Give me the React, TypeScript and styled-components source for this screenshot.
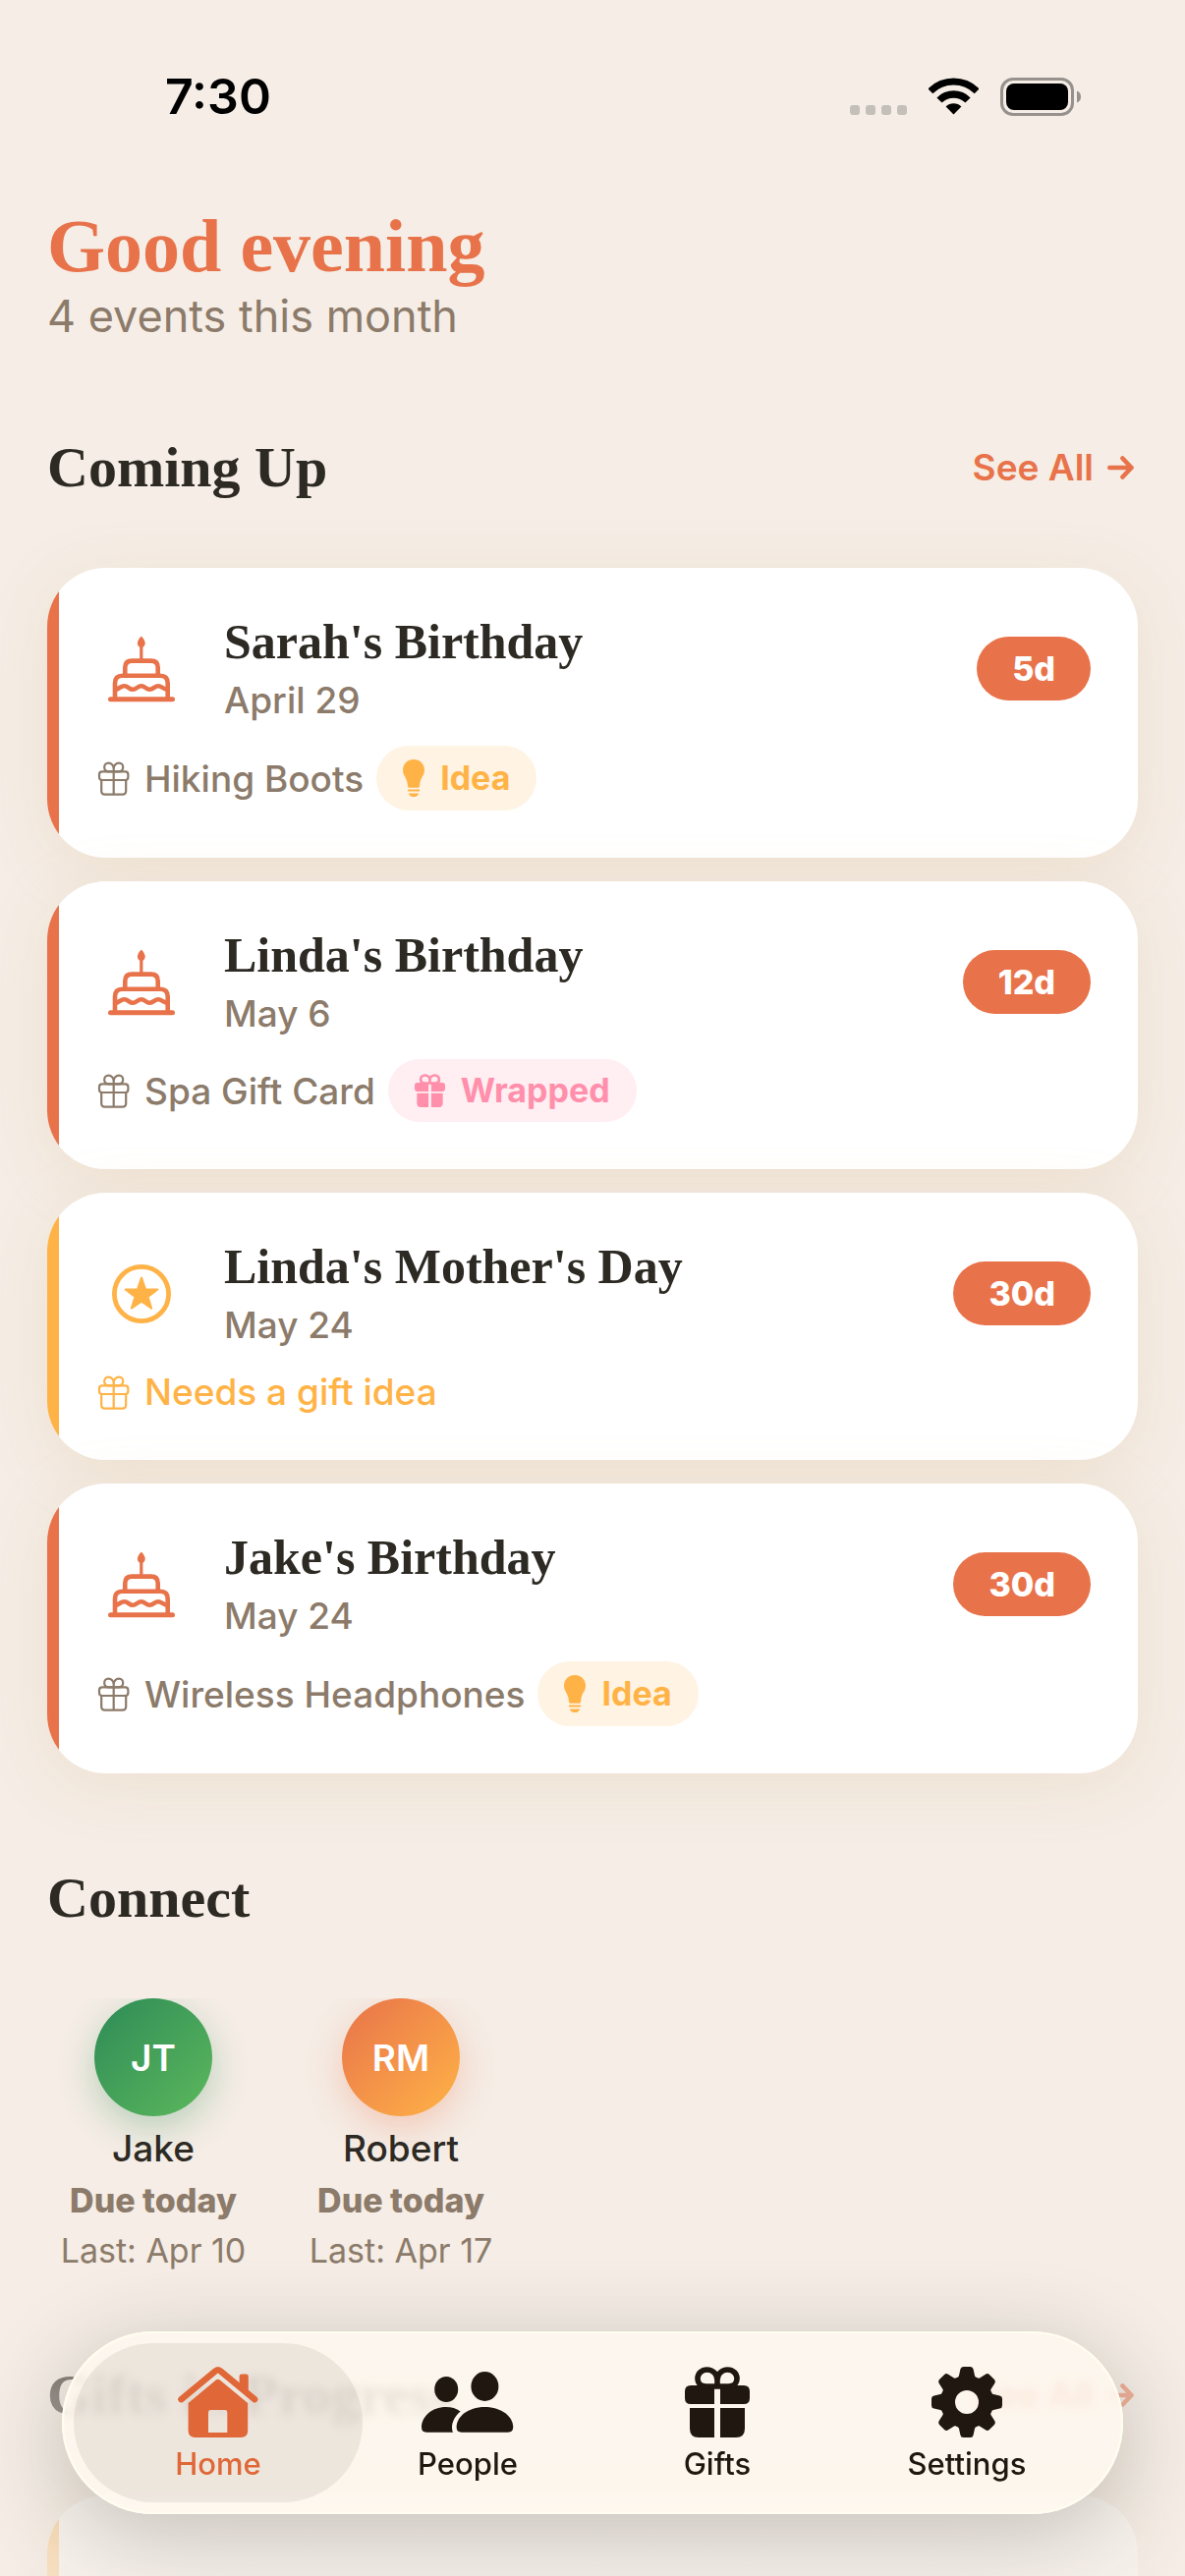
import React from "react";
import styled, { createGlobalStyle } from "styled-components";

const color = {
  page: "#f5ede6",
  ink: "#2d2a24",
  muted: "#8c7b6a",
  coral: "#e8734a",
  amber: "#ffb347",
  pink: "#ff8fab",
};

const sans = `Inter, "Liberation Sans", sans-serif`;
const serif = `"Liberation Serif", serif`;

const GlobalStyle = createGlobalStyle`
  * { box-sizing: border-box; }
  body { margin: 0; background: ${color.page}; }
  h1, h2, h3, p, ul { margin: 0; padding: 0; }
  ul { list-style: none; }
  svg { display: block; flex: none; }
`;

const Shell = styled.div`
  position: relative;
  height: 100vh;
  overflow: hidden;
  background: ${color.page};
  color: ${color.ink};
  font-family: ${sans};
`;

const Scroller = styled.div`
  height: 100%;
  overflow-y: auto;
  scrollbar-width: none;
`;

const StatusBar = styled.div`
  display: flex;
  align-items: center;
  justify-content: space-between;
  padding: 67px 106px 0 168px;
  color: #000;
`;

const Clock = styled.span`
  font-size: 50px;
  line-height: 62px;
  font-weight: 600;
`;

const StatusIcons = styled.div`
  display: flex;
  align-items: center;
  gap: 22px;
`;

const Main = styled.main`
  display: flex;
  flex-direction: column;
  gap: 91px;
  padding: 79px 48px 0;
`;

const Greeting = styled.header`
  display: flex;
  flex-direction: column;
  gap: 3px;
`;

const GreetingTitle = styled.h1`
  font: 700 76px/84px ${serif};
  color: ${color.coral};
`;

const GreetingNote = styled.p`
  font-size: 45px;
  line-height: 54px;
  color: ${color.muted};
`;

const Section = styled.section`
  display: flex;
  flex-direction: column;
  gap: 66px;
`;

const SectionHead = styled.div`
  display: flex;
  align-items: center;
  justify-content: space-between;
`;

const SectionTitle = styled.h2`
  font: 700 58px/72px ${serif};
`;

const SeeAllLink = styled.a`
  display: flex;
  align-items: center;
  gap: 14px;
  padding-right: 4px;
  font-size: 37px;
  line-height: 44px;
  font-weight: 600;
  color: ${color.coral};
  text-decoration: none;
`;

const CardList = styled.ul`
  display: flex;
  flex-direction: column;
  gap: 24px;
`;

const Card = styled.li<{ $accent: string }>`
  display: flex;
  flex-direction: column;
  gap: 24px;
  min-height: 240px;
  padding: 48px;
  border-radius: 60px;
  background: linear-gradient(to right, ${(p) => p.$accent} 12px, #fff 12px);
  box-shadow: 0 12px 60px rgba(212, 180, 131, 0.22);
`;

const CardHead = styled.div`
  display: flex;
  align-items: center;
  gap: 36px;
`;

const CardText = styled.div`
  display: flex;
  flex-direction: column;
  flex: 1;
  gap: 10px;
`;

const CardTitle = styled.h3`
  font: 700 50px/54px ${serif};
`;

const CardDate = styled.p`
  font-size: 37px;
  line-height: 45px;
  font-weight: 500;
  color: ${color.muted};
`;

const CountPill = styled.span`
  padding: 12px 36px;
  border-radius: 33px;
  background: ${color.coral};
  color: #fff;
  font-size: 34px;
  line-height: 41px;
  font-weight: 800;
`;

const GiftRow = styled.div<{ $tone: string }>`
  display: flex;
  align-items: center;
  gap: 13px;
  color: ${(p) => p.$tone};
  font-size: 37px;
  line-height: 43px;
  font-weight: 500;
`;

const Badge = styled.span<{ $tone: string; $fill: string }>`
  display: flex;
  align-items: center;
  gap: 16px;
  padding: 14px 27px;
  border-radius: 33px;
  background: ${(p) => p.$fill};
  color: ${(p) => p.$tone};
  font-size: 34px;
  line-height: 36px;
  font-weight: 700;
`;

const PeopleRow = styled.ul`
  display: flex;
  gap: 36px;
  margin: 0 -48px;
  padding: 0 48px;
  overflow-x: auto;
  overflow-y: hidden;
  scrollbar-width: none;
`;

const Person = styled.li`
  display: flex;
  flex-direction: column;
  align-items: center;
  gap: 11px;
  width: 216px;
  flex: none;
`;

const Avatar = styled.span<{ $from: string; $to: string; $glow: string }>`
  display: flex;
  align-items: center;
  justify-content: center;
  width: 120px;
  height: 120px;
  border-radius: 50%;
  background: linear-gradient(135deg, ${(p) => p.$from}, ${(p) => p.$to});
  box-shadow: 0 12px 36px ${(p) => p.$glow};
  color: #fff;
  font-size: 37px;
  font-weight: 600;
`;

const PersonName = styled.h3`
  font-size: 37px;
  line-height: 44px;
  font-weight: 500;
`;

const PersonNote = styled.p<{ $strong?: boolean }>`
  font-size: 34px;
  line-height: 40px;
  font-weight: ${(p) => (p.$strong ? 800 : 400)};
  color: ${color.muted};
`;

const BottomFade = styled.div`
  position: absolute;
  inset: auto 0 0;
  height: 320px;
  pointer-events: none;
  background: linear-gradient(
    rgba(245, 237, 230, 0),
    rgba(245, 237, 230, 0.5) 42%,
    rgba(245, 237, 230, 0.78)
  );
`;

const TabBar = styled.nav`
  position: absolute;
  inset: auto 63px 63px;
  display: flex;
  padding: 12px;
  border-radius: 93px;
  background: rgba(255, 248, 240, 0.78);
  backdrop-filter: blur(5px);
  box-shadow: inset 0 0 0 2px #fffdf0, 0 20px 90px rgba(62, 56, 42, 0.28);
`;

const Tab = styled.button<{ $active?: boolean }>`
  display: flex;
  flex: 1 1 0;
  flex-direction: column;
  align-items: center;
  gap: 9px;
  padding: 24px 0 21px;
  border: 0;
  border-radius: 81px;
  background: ${(p) => (p.$active ? "rgba(120, 110, 95, 0.12)" : "transparent")};
  color: ${(p) => (p.$active ? "#e06737" : "#1f1710")};
  font: 500 31px/36px ${sans};

  & + & {
    margin-left: -40px;
  }
`;

const SignalDots = () => (
  <svg width="58" height="38" viewBox="0 0 58 38" fill="#c5bfb9">
    {[0, 16, 32, 48].map((x) => (
      <rect key={x} x={x} y="28" width="10" height="10" rx="3" />
    ))}
  </svg>
);

const WifiIcon = () => (
  <svg width="51" height="38" viewBox="0 0 51 38" fill="none" stroke="#000">
    <path d="M1.8 13.8A33.5 33.5 0 0 1 49.2 13.8" strokeWidth="7" />
    <path d="M11 23A20.5 20.5 0 0 1 40 23" strokeWidth="7.4" />
    <path d="M25.5 37.6L17.6 29.4A11.5 11.5 0 0 1 33.4 29.4Z" fill="#000" stroke="none" />
  </svg>
);

const BatteryIcon = () => (
  <svg width="82" height="39" viewBox="0 0 82 39">
    <rect x="1.5" y="1.5" width="72" height="36" rx="11.5" fill="none" stroke="#96918c" strokeWidth="3" />
    <rect x="6" y="6" width="63" height="27" rx="8" />
    <path d="M78 13.5Q82 15 82 19.5T78 25.5Z" fill="#96918c" />
  </svg>
);

const ArrowIcon = () => (
  <svg width="27" height="24" viewBox="0 0 27 24" fill="none" stroke="currentColor" strokeWidth="4.6" strokeLinecap="round" strokeLinejoin="round">
    <path d="M2.3 12H24.5M15.5 2.5L24.5 12L15.5 21.5" />
  </svg>
);

const CakeIcon = () => (
  <svg width="96" height="96" viewBox="0 1 96 96" fill="none" stroke={color.coral} strokeWidth="4.6">
    <path d="M16.5 79.7H79.5" strokeLinecap="round" strokeWidth="5" />
    <path d="M21 79V63.5Q21 55.8 28.7 55.8H67Q74.7 55.8 74.7 63.5V79" />
    <path d="M31.3 56V47.5Q31.3 40.6 38.2 40.6H57.8Q64.7 40.6 64.7 47.5V56" />
    <path d="M21 69.8C25 69.8 26.5 66.2 30.5 66.2S35.5 69.8 39.2 69.8S44 66.2 47.8 66.2S52.5 69.8 56.3 69.8S61.5 66.2 65 66.2S70.5 69.8 74.7 69.8" />
    <path d="M47.8 26V40" strokeWidth="3.2" />
    <path d="M47.8 15.4C50 17.5 51.7 20.3 51.7 22.6C51.7 25.4 50 27.2 47.8 27.2S43.9 25.4 43.9 22.6C43.9 20.3 45.6 17.5 47.8 15.4Z" fill={color.coral} stroke="none" />
  </svg>
);

const StarIcon = () => (
  <svg width="96" height="96" viewBox="0 0 96 96">
    <circle cx="48" cy="48" r="27.6" fill="none" stroke={color.amber} strokeWidth="4.8" />
    <path
      d="M48 31.5L52.1 43.3L64.4 43.5L54.6 51L58.2 62.8L48 55.8L37.8 62.8L41.4 51L31.6 43.5L43.9 43.3Z"
      fill={color.amber}
      stroke={color.amber}
      strokeWidth="2"
      strokeLinejoin="round"
    />
  </svg>
);

const GiftOutlineIcon = () => (
  <svg width="38" height="38" viewBox="0 0 38 38" fill="none" stroke="currentColor" strokeWidth="2.2">
    <rect x="5" y="12.4" width="29.4" height="8.6" rx="3" />
    <path d="M7.2 21V32Q7.2 35.6 10.8 35.6H28.6Q32.2 35.6 32.2 32V21M19.7 12V35.6" />
    <path d="M19.7 12.4H15C11.6 12.4 10.2 10.2 10.2 8C10.2 5.4 12 3.6 14.3 3.6C17.3 3.6 19.7 6.2 19.7 9.6V12.4H24.4C27.8 12.4 29.2 10.2 29.2 8C29.2 5.4 27.4 3.6 25.1 3.6C22.1 3.6 19.7 6.2 19.7 9.6" />
  </svg>
);

const BulbIcon = () => (
  <svg width="22" height="38" viewBox="0 0 22 38" fill="currentColor">
    <path d="M11 0C17.3 0 22 4.6 22 11C22 15.6 18.4 18.6 17.6 23L17 27.2Q16.8 28.8 15.2 28.8H6.8Q5.2 28.8 5 27.2L4.4 23C3.6 18.6 0 15.6 0 11C0 4.6 4.7 0 11 0Z" />
    <rect x="4.8" y="30.4" width="12.4" height="2.2" rx="1.1" />
    <path d="M5.8 34.4H16.2C15.5 36.8 13.6 38 11 38S6.5 36.8 5.8 34.4Z" />
  </svg>
);

const GiftSolidIcon = ({ width, height }: { width: number; height: number }) => (
  <svg width={width} height={height} viewBox="0 0 66 72" fill="currentColor">
    <path d="M30 19H6Q0 19 0 25V32Q0 38 6 38H30ZM36 19H60Q66 19 66 25V32Q66 38 60 38H36ZM30 42H5V63Q5 72 14 72H30ZM36 42H61V63Q61 72 52 72H36Z" />
    <path
      d="M33 20V13.5C33 7.5 28.5 3 22.5 3C17 3 13 7 13 12C13 16.8 16.5 20 21.5 20H44.5C49.5 20 53 16.8 53 12C53 7 49 3 43.5 3C37.5 3 33 7.5 33 13.5"
      fill="none"
      stroke="currentColor"
      strokeWidth="5.6"
    />
  </svg>
);

const HomeIcon = () => (
  <svg width="82" height="72" viewBox="0 0 82 72" fill="currentColor">
    <path d="M3.4 33.2L38.4 4.2Q40.8 2.4 43.2 4.2L78.2 33.2" fill="none" stroke="currentColor" strokeWidth="6.4" strokeLinecap="round" strokeLinejoin="round" />
    <path d="M62.6 22V10Q62.6 7.6 65 7.6H69.4Q71.8 7.6 71.8 10V30Z" />
    <path fillRule="evenodd" d="M38.8 13.6Q40.8 12 42.8 13.6L71.2 37V65Q71.2 72 64.2 72H17.6Q10.6 72 10.6 65V37ZM33.4 44Q31 44 31 46.4V67H50.3V46.4Q50.3 44 47.9 44Z" />
  </svg>
);

const PeopleIcon = () => (
  <svg width="94" height="72" viewBox="0 -5 94 72" fill="currentColor">
    <ellipse cx="25.2" cy="18" rx="12" ry="13" />
    <ellipse cx="64.4" cy="15" rx="14" ry="15" />
    <path d="M0 56.5C0 46 10 36 25 36C30.3 36 35.5 37.5 39.6 40.4C34 45 31 51 31 57Q31 60 32 61.7H5Q0 61.7 0 56.5Z" />
    <path d="M35.6 56.5C35.6 46 47 36 64.4 36S93.2 46 93.2 56.5Q93.2 61.7 88 61.7H40.8Q35.6 61.7 35.6 56.5Z" />
  </svg>
);

const GearIcon = () => (
  <svg width="72" height="72" viewBox="-36 -36 72 72">
    <circle r="19.5" fill="none" stroke="currentColor" strokeWidth="15" />
    {[0, 45, 90, 135, 180, 225, 270, 315].map((turn) => (
      <path
        key={turn}
        transform={`rotate(${turn})`}
        d="M-9.5 -23.5L-8 -27L-6.6 -33.4Q-6.1 -36 -3.6 -36H3.6Q6.1 -36 6.6 -33.4L8 -27L9.5 -23.5Z"
        fill="currentColor"
      />
    ))}
  </svg>
);

type Status = "idea" | "wrapped";

const badgeLooks = {
  idea: { label: "Idea", tone: color.amber, fill: "#fff3e3", icon: <BulbIcon /> },
  wrapped: { label: "Wrapped", tone: color.pink, fill: "#ffeef2", icon: <GiftSolidIcon width={31} height={36} /> },
};

const events: { title: string; date: string; days: number; gift?: string; status?: Status; holiday?: boolean }[] = [
  { title: "Sarah's Birthday", date: "April 29", days: 5, gift: "Hiking Boots", status: "idea" },
  { title: "Linda's Birthday", date: "May 6", days: 12, gift: "Spa Gift Card", status: "wrapped" },
  { title: "Linda's Mother's Day", date: "May 24", days: 30, holiday: true },
  { title: "Jake's Birthday", date: "May 24", days: 30, gift: "Wireless Headphones", status: "idea" },
];

const people = [
  { name: "Jake", initials: "JT", last: "Last: Apr 10", from: "#2e8b57", to: "#5cb85c", glow: "rgba(46, 139, 87, 0.3)" },
  { name: "Robert", initials: "RM", last: "Last: Apr 17", from: "#e8734a", to: "#ffb347", glow: "rgba(240, 115, 74, 0.3)" },
];

const tabs = [
  { label: "Home", icon: <HomeIcon /> },
  { label: "People", icon: <PeopleIcon /> },
  { label: "Gifts", icon: <GiftSolidIcon width={66} height={72} /> },
  { label: "Settings", icon: <GearIcon /> },
];

const SeeAll = () => (
  <SeeAllLink href="#">
    See All
    <ArrowIcon />
  </SeeAllLink>
);

function StatusBadge({ status }: { status: Status }) {
  const look = badgeLooks[status];
  return (
    <Badge $tone={look.tone} $fill={look.fill}>
      {look.icon}
      {look.label}
    </Badge>
  );
}

export default function App() {
  return (
    <Shell>
      <GlobalStyle />
      <Scroller>
        <StatusBar>
          <Clock>7:30</Clock>
          <StatusIcons>
            <SignalDots />
            <WifiIcon />
            <BatteryIcon />
          </StatusIcons>
        </StatusBar>
        <Main>
          <Greeting>
            <GreetingTitle>Good evening</GreetingTitle>
            <GreetingNote>4 events this month</GreetingNote>
          </Greeting>

          <Section>
            <SectionHead>
              <SectionTitle>Coming Up</SectionTitle>
              <SeeAll />
            </SectionHead>
            <CardList>
              {events.map((event) => (
                <Card key={event.title} $accent={event.holiday ? color.amber : color.coral}>
                  <CardHead>
                    {event.holiday ? <StarIcon /> : <CakeIcon />}
                    <CardText>
                      <CardTitle>{event.title}</CardTitle>
                      <CardDate>{event.date}</CardDate>
                    </CardText>
                    <CountPill>{`${event.days}d`}</CountPill>
                  </CardHead>
                  <GiftRow $tone={event.gift ? color.muted : color.amber}>
                    <GiftOutlineIcon />
                    {event.gift ?? "Needs a gift idea"}
                    {event.status && <StatusBadge status={event.status} />}
                  </GiftRow>
                </Card>
              ))}
            </CardList>
          </Section>

          <Section>
            <SectionHead>
              <SectionTitle>Connect</SectionTitle>
            </SectionHead>
            <PeopleRow>
              {people.map((person) => (
                <Person key={person.name}>
                  <Avatar $from={person.from} $to={person.to} $glow={person.glow}>
                    {person.initials}
                  </Avatar>
                  <PersonName>{person.name}</PersonName>
                  <PersonNote $strong>Due today</PersonNote>
                  <PersonNote>{person.last}</PersonNote>
                </Person>
              ))}
            </PeopleRow>
          </Section>

          <Section>
            <SectionHead>
              <SectionTitle>Gifts in Progress</SectionTitle>
              <SeeAll />
            </SectionHead>
            <CardList>
              <Card $accent={color.amber} />
            </CardList>
          </Section>
        </Main>
      </Scroller>

      <BottomFade />
      <TabBar>
        {tabs.map((tab, index) => (
          <Tab key={tab.label} type="button" $active={index === 0}>
            {tab.icon}
            {tab.label}
          </Tab>
        ))}
      </TabBar>
    </Shell>
  );
}
